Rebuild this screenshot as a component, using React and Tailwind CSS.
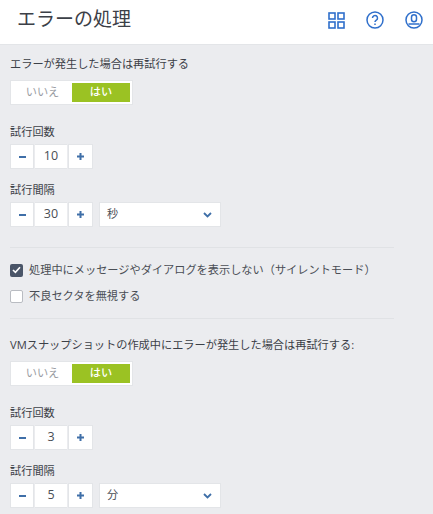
import React from "react";

const font = { fontFamily: '"Open Sans", "Noto Sans CJK JP", sans-serif' };

const Toggle = () => (
  <div className="flex h-[25px] w-[123px] items-center bg-white border border-[#e3e5e8] pl-[2px] pr-[2px]">
    <span className="flex-1 text-center text-[11.2px] text-[#9a9da3]">いいえ</span>
    <span className="flex h-[19px] w-[58px] items-center justify-center bg-[#9bc223] text-[11.2px] text-white font-medium">はい</span>
  </div>
);

const Stepper = ({ value }) => (
  <div className="flex h-[25px] w-[83px] bg-[#ebecef] gap-px">
    <button className="flex h-full w-[24px] items-center justify-center bg-white border border-[#e3e5e8]">
      <span className="h-[2px] w-[7px] bg-[#3f6fa8]" />
    </button>
    <div className="flex h-full w-[32px] items-center justify-center bg-white border-y border-[#e3e5e8] text-[12.5px] text-[#4a4e55]">
      {value}
    </div>
    <button className="flex h-full w-[25px] items-center justify-center bg-white border border-[#e3e5e8] text-[#3f6fa8]">
      <svg width="9" height="9" viewBox="0 0 9 9">
        <path d="M4.5 1v7M1 4.5h7" stroke="currentColor" strokeWidth="2" />
      </svg>
    </button>
  </div>
);

const Select = ({ value }) => (
  <div className="flex h-[25px] w-[122px] items-center justify-between bg-white border border-[#e3e5e8] pl-[7px] pr-[8px] text-[11.2px] text-[#4a4e55]">
    <span>{value}</span>
    <svg width="9" height="6" viewBox="0 0 9 6" className="text-[#3f6fa8]">
      <path d="M1 1l3.5 3.5L8 1" fill="none" stroke="currentColor" strokeWidth="1.8" />
    </svg>
  </div>
);

const Label = ({ children, className }) => (
  <div className={`text-[11.2px] leading-[18px] text-[#3c4047] ${className}`}>{children}</div>
);

const RetryBlock = ({ count, interval, unit }) => (
  <>
    <Label className="mt-[18px]">試行回数</Label>
    <div className="mt-[3px]">
      <Stepper value={count} />
    </div>
    <Label className="mt-[12px]">試行間隔</Label>
    <div className="mt-[3px] flex gap-[6px]">
      <Stepper value={interval} />
      <Select value={unit} />
    </div>
  </>
);

export default function App() {
  return (
    <div className="h-[514px] w-[433px] overflow-hidden bg-[#ebecef]" style={font}>
      <header className="flex h-[45px] items-center justify-between bg-white border-b border-[#e3e5e8] pb-[4px] pl-[17px] pr-[10px]">
        <h1 className="mb-[1px] text-[19px] font-normal text-[#3c4047]">エラーの処理</h1>
        <div className="flex items-center gap-[21px] text-[#2f6fcb]">
          <svg width="17" height="17" viewBox="0 0 17 17" fill="none" stroke="currentColor" strokeWidth="1.6">
            <rect x="1" y="1" width="6" height="6" />
            <rect x="10" y="1" width="6" height="6" />
            <rect x="1" y="10" width="6" height="6" />
            <rect x="10" y="10" width="6" height="6" />
          </svg>
          <svg width="18" height="18" viewBox="0 0 18 18" fill="none" stroke="currentColor" strokeWidth="1.5">
            <circle cx="9" cy="9" r="8" />
            <path d="M6.5 7a2.5 2.5 0 1 1 3.8 2.1C9.4 9.7 9 10.2 9 11" />
            <path d="M9 12.5v1.5" />
          </svg>
          <svg width="18" height="18" viewBox="0 0 18 18" fill="none" stroke="currentColor" strokeWidth="1.5">
            <circle cx="9" cy="9" r="8" />
            <rect x="6.5" y="3.8" width="5" height="7" rx="2.5" />
            <path d="M3.5 13h11" />
          </svg>
        </div>
      </header>

      <main className="pl-[10px]">
        <Label className="mt-[10px]">エラーが発生した場合は再試行する</Label>
        <div className="mt-[7px]">
          <Toggle />
        </div>
        <RetryBlock count="10" interval="30" unit="秒" />

        <div className="mt-[20px] h-px w-[384px] bg-[#e0e2e5]" />

        <label className="mt-[15px] flex items-center gap-[6px] text-[11.2px] leading-[14px] text-[#4a4e55]">
          <span className="flex h-[13px] w-[13px] items-center justify-center rounded-[2px] bg-[#4a5568] text-white">
            <svg width="9" height="8" viewBox="0 0 9 8">
              <path d="M1 4l2.4 2.4L8 1.2" fill="none" stroke="currentColor" strokeWidth="1.6" />
            </svg>
          </span>
          処理中にメッセージやダイアログを表示しない（サイレントモード）
        </label>
        <label className="mt-[12px] flex items-center gap-[6px] text-[11.2px] leading-[14px] text-[#4a4e55]">
          <span className="h-[13px] w-[13px] rounded-[2px] bg-white border border-[#b9bcc2]" />
          不良セクタを無視する
        </label>

        <div className="mt-[15px] h-px w-[384px] bg-[#e0e2e5]" />

        <Label className="mt-[17px]">VMスナップショットの作成中にエラーが発生した場合は再試行する:</Label>
        <div className="mt-[7px]">
          <Toggle />
        </div>
        <RetryBlock count="3" interval="5" unit="分" />
      </main>
    </div>
  );
}
